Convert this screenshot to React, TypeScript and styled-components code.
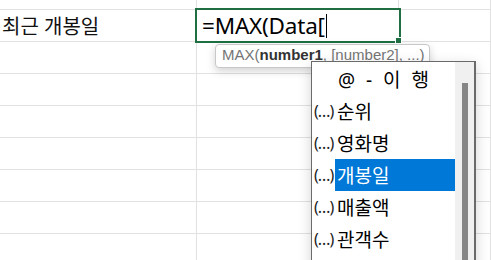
import React from "react";
import styled, { createGlobalStyle } from "styled-components";

const Global = createGlobalStyle`
  html, body { margin: 0; padding: 0; background: #fff; overflow: hidden; }
  body { font-family: "Noto Sans", "Noto Sans CJK KR", sans-serif; }
`;

const Sheet = styled.div`
  position: relative;
  width: 491px;
  height: 260px;
  overflow: hidden;
  display: grid;
  grid-template-columns: 197px 202px 1fr;
  grid-template-rows: 10px repeat(8, 32px);
`;

const Cell = styled.div`
  position: relative;
  box-sizing: border-box;
  border-right: 1px solid #e1e1e1;
  border-bottom: 1px solid #e1e1e1;
  display: flex;
  align-items: center;
  padding-left: 2px;
  font-size: 20px;
  color: #111;
  white-space: nowrap;
`;

const EditBox = styled.div`
  position: absolute;
  left: -2px;
  top: -2px;
  width: 206px;
  height: 35px;
  box-sizing: border-box;
  border: 2px solid #1f6f43;
  display: flex;
  align-items: center;
  padding-left: 5px;
  font-size: 22.5px;
  letter-spacing: -0.2px;
  color: #000;
  z-index: 2;
  background: #fff;
`;

const Caret = styled.span`
  display: inline-block;
  width: 1px;
  height: 24px;
  background: #000;
  margin-left: 1px;
`;

const FillHandle = styled.div`
  position: absolute;
  right: -3px;
  bottom: -3px;
  width: 5px;
  height: 5px;
  background: #1f6f43;
  border: 1px solid #fff;
`;

const Tooltip = styled.div`
  position: absolute;
  left: 215px;
  top: 44px;
  width: 215px;
  height: 24px;
  box-sizing: border-box;
  border: 1px solid #c8c8c8;
  border-radius: 4px;
  background: #fff;
  box-shadow: 0 3px 8px rgba(0, 0, 0, 0.18);
  font-family: "Liberation Sans", Arial, sans-serif;
  font-size: 15px;
  line-height: 17px;
  color: #757575;
  padding: 1px 0 0 6px;
  white-space: pre;
  z-index: 3;
  b { color: #333; font-weight: 700; }
`;

const Dropdown = styled.div`
  position: absolute;
  left: 311px;
  top: 61px;
  width: 165px;
  height: 210px;
  box-sizing: border-box;
  border: 1px solid #6a6a6a;
  border-right-width: 2px;
  background: #fff;
  box-shadow: 0 4px 12px rgba(0, 0, 0, 0.18);
  display: flex;
  z-index: 4;
`;

const List = styled.div`
  flex: 1;
  display: flex;
  flex-direction: column;
  padding-top: 1px;
`;

const Item = styled.div`
  height: 32px;
  display: flex;
  align-items: center;
  font-size: 19px;
  color: #000;
  white-space: nowrap;
`;

const Label = styled.span<{ $selected?: boolean }>`
  flex: 1;
  height: 32px;
  display: flex;
  align-items: center;
  padding-left: 2px;
  background: ${(p) => (p.$selected ? "#0078d7" : "transparent")};
  color: ${(p) => (p.$selected ? "#fff" : "#000")};
`;

const Header = styled.div`
  height: 32px;
  display: flex;
  align-items: center;
  padding-left: 26px;
  font-size: 19px;
  word-spacing: 6px;
  color: #000;
  white-space: pre;
`;

const Ellipsis = styled.span`
  width: 23px;
  flex: none;
  font-size: 16px;
  color: #222;
  padding-left: 2px;
  letter-spacing: -1px;
  box-sizing: border-box;
  overflow: hidden;
`;

const Track = styled.div`
  width: 19px;
  background: #f0f0f0;
  display: flex;
  justify-content: center;
  padding-top: 21px;
`;

const Thumb = styled.div`
  width: 6px;
  height: 200px;
  background: #868686;
`;

const items = ["순위", "영화명", "개봉일", "매출액", "관객수"];

export default function App() {
  const rows = 9;
  return (
    <>
      <Global />
      <Sheet>
        {Array.from({ length: rows }).map((_, r) => (
          <React.Fragment key={r}>
            <Cell>{r === 1 ? "최근 개봉일" : null}</Cell>
            <Cell>
              {r === 1 ? (
                <EditBox>
                  =MAX(Data[
                  <Caret />
                  <FillHandle />
                </EditBox>
              ) : null}
            </Cell>
            <Cell />
          </React.Fragment>
        ))}
        <Tooltip>
          MAX(<b>number1</b>, [number2], ...)
        </Tooltip>
        <Dropdown>
          <List>
            <Header>@ - 이 행</Header>
            {items.map((it) => (
              <Item key={it}>
                <Ellipsis>(…)</Ellipsis>
                <Label $selected={it === "개봉일"}>{it}</Label>
              </Item>
            ))}
          </List>
          <Track>
            <Thumb />
          </Track>
        </Dropdown>
      </Sheet>
    </>
  );
}
